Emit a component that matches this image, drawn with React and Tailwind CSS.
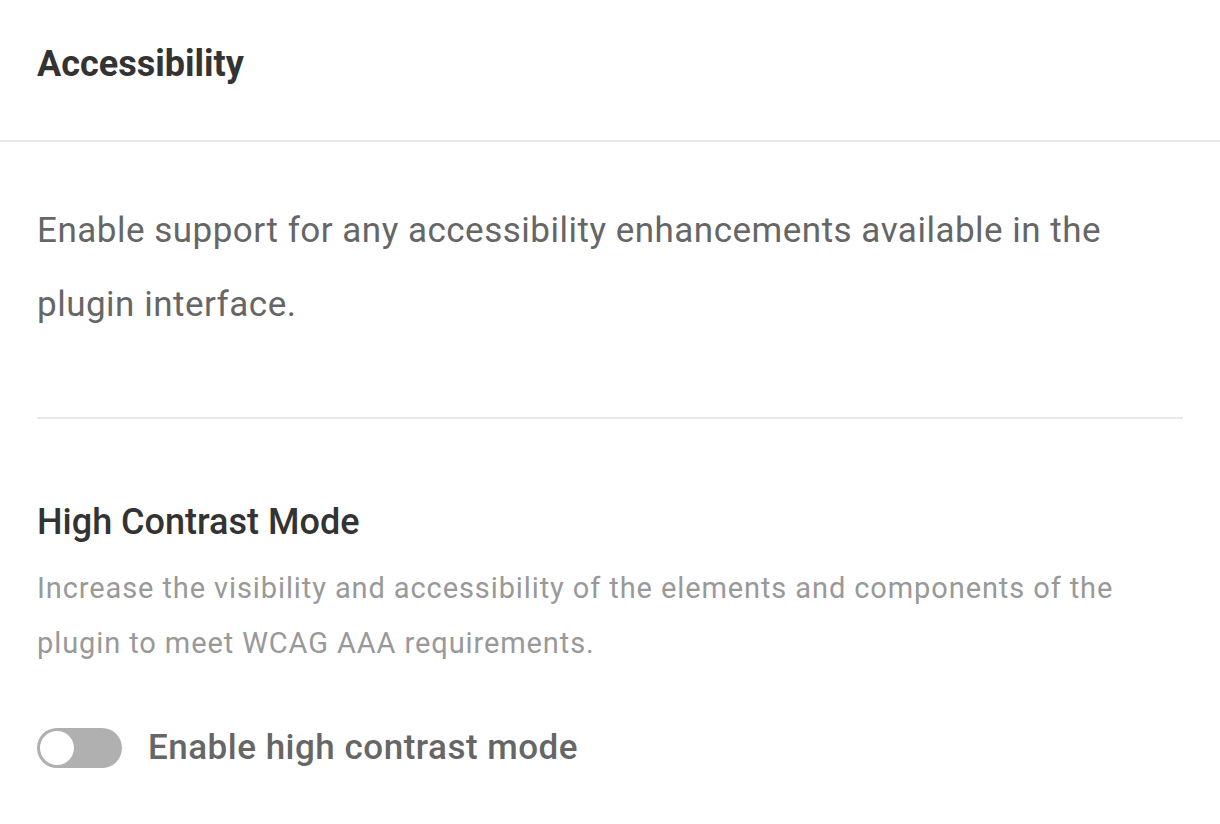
export default function App() {
  return (
    <div className="w-[1220px] min-h-[824px] bg-white" style={{ fontFamily: "Roboto, 'Noto Sans', sans-serif" }}>
      <div className="h-[142px] border-b-2 border-[#e8e8e8] px-[37px] pt-[46px]">
        <h1 className="text-[36px] leading-[36px] font-bold text-[#333333]">Accessibility</h1>
      </div>
      <div className="px-[37px]">
        <p className="pt-[52px] w-[1120px] text-[35px] leading-[74px] tracking-[0.5px] text-[#666666]">
          Enable support for any accessibility enhancements available in the plugin interface.
        </p>
        <div className="mt-[75px] h-[2px] w-[1146px] bg-[#e8e8e8]" />
        <h2 className="mt-[85px] text-[36px] leading-[36px] font-medium text-[#333333]">High Contrast Mode</h2>
        <p className="mt-[21px] w-[1120px] text-[29px] leading-[55px] tracking-[0.9px] text-[#999999]">
          Increase the visibility and accessibility of the elements and components of the plugin to meet WCAG AAA requirements.
        </p>
        <div className="mt-[57px] flex items-center gap-[26px]">
          <button className="h-[40px] w-[85px] rounded-full bg-[#b0b0b0] p-[3px] flex items-center">
            <span className="block h-[34px] w-[34px] rounded-full bg-white" />
          </button>
          <span className="text-[35px] leading-[40px] font-medium tracking-[0.5px] text-[#666666]">Enable high contrast mode</span>
        </div>
      </div>
    </div>
  );
}
